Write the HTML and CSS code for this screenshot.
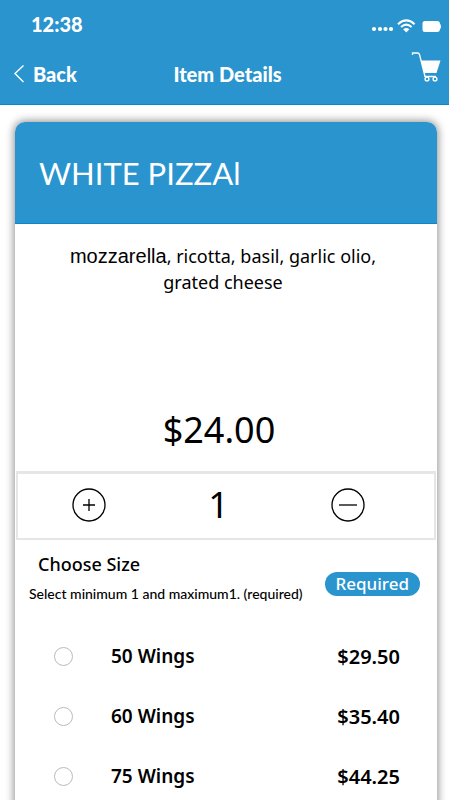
FILE: index.html
```html
<!DOCTYPE html>
<html lang="en">
<head>
<meta charset="utf-8">
<meta name="viewport" content="width=device-width, initial-scale=1">
<title>Item Details</title>
<link rel="stylesheet" href="styles.css">
</head>
<body>
<header class="topbar">
  <div class="status">
    <span class="time">12:38</span>
    <svg class="status-icons" width="70" height="18" viewBox="0 0 70 18" fill="#fff" aria-hidden="true">
      <circle cx="3" cy="12" r="2.1"/><circle cx="9" cy="12" r="2.1"/><circle cx="14.500" cy="12" r="2.100"/><circle cx="20" cy="12" r="2.1"/>
      <g fill="none" stroke="#fff" stroke-width="2"><path d="M27 7.200Q35.300-0.400 43.600 7.200"/><path d="M30 10Q35.300 5.200 40.600 10"/></g>
      <path d="M32.200 12.300Q35.300 9.700 38.400 12.300L35.300 15.500Z"/>
      <path d="M54 4H66Q69 4 69 7Q70 7.200 70 9.500Q70 11.800 69 12Q69 15 66 15H54Q51.500 15 51.500 12.500V6.500Q51.500 4 54 4Z"/>
    </svg>
  </div>
  <nav class="nav">
    <a class="back" href="#"><svg width="12" height="20" viewBox="0 0 12 20" fill="none" stroke="#fff" stroke-width="1.4" aria-hidden="true"><path d="M9.500 1.500L1 9.500L9.500 18"/></svg>Back</a>
    <h1 class="title">Item Details</h1>
    <button class="cart" type="button" aria-label="Cart"><svg width="30" height="32" viewBox="0 0 30 32" aria-hidden="true">
      <path d="M1.500 4V2H6.500Q8 2 8.500 3.500L14 25.500H25" fill="none" stroke="#fff" stroke-width="1.300"/>
      <path d="M10 9.500H29.500L25.500 22H13.500Z" fill="#fff"/>
      <g fill="none" stroke="#fff" stroke-width="1.400"><circle cx="16" cy="28" r="1.900"/><circle cx="24" cy="28" r="1.900"/></g>
    </svg></button>
  </nav>
</header>
<main class="card">
  <h2 class="item-name">WHITE PIZZAl</h2>
  <div class="summary">
    <p class="description"><span class="lead">mozzarella</span>, ricotta, basil, garlic olio,<br>grated cheese</p>
    <p class="price">$24.00</p>
  </div>
  <div class="quantity">
    <button class="step" type="button" aria-label="Add one"><svg width="34" height="34" viewBox="0 0 34 34" fill="none" stroke="#000" stroke-width="1.300"><circle cx="17" cy="17" r="16"/><path d="M11 17H23M17 11V23"/></svg></button>
    <output class="count">1</output>
    <button class="step" type="button" aria-label="Remove one"><svg width="34" height="34" viewBox="0 0 34 34" fill="none" stroke="#000" stroke-width="1.300"><circle cx="17" cy="17" r="16"/><path d="M8 17H26"/></svg></button>
  </div>
  <section class="choices">
    <div class="choice-head">
      <div>
        <h3 class="choice-title">Choose Size</h3>
        <p class="hint">Select minimum 1 and maximum1. (required)</p>
      </div>
      <span class="badge">Required</span>
    </div>
    <div class="options">
      <label class="option"><input type="radio" name="size"><span>50 Wings</span><span class="cost">$29.50</span></label>
      <label class="option"><input type="radio" name="size"><span>60 Wings</span><span class="cost">$35.40</span></label>
      <label class="option"><input type="radio" name="size"><span>75 Wings</span><span class="cost">$44.25</span></label>
    </div>
  </section>
</main>
</body>
</html>
```
FILE: styles.css
```css
* {
  box-sizing: border-box;
}

body,
h1,
h2,
h3,
p {
  margin: 0;
}

body {
  background: #fff;
  color: #000;
  font-family: "Noto Sans", sans-serif;
  height: 100vh;
  overflow: hidden;
}

button {
  padding: 0;
  border: 0;
  background: none;
  color: inherit;
}

svg {
  display: block;
}

.topbar {
  margin-right: 1px;
  padding: 9px 8px 0 14px;
  height: 105px;
  border-bottom: 1px solid #0b86c7;
  background: #2994ce;
  color: #fff;
  font-family: Lato, sans-serif;
  font-size: 20px;
  font-weight: 900;
}

.status {
  display: flex;
  justify-content: space-between;
  align-items: center;
  height: 30px;
  padding-left: 17px;
}

.status-icons {
  margin-top: 4px;
}

.nav {
  display: grid;
  grid-template-columns: 1fr auto 1fr;
  align-items: center;
  height: 48px;
  margin-top: 7px;
}

.back {
  display: flex;
  align-items: center;
  gap: 7px;
  padding-top: 8px;
  color: inherit;
  text-decoration: none;
}

.title {
  padding-top: 8px;
  font-size: 20px;
  font-weight: 900;
}

.cart {
  justify-self: end;
  margin-top: -6px;
}

.card {
  margin: 17px 13px 0 15px;
  min-height: 700px;
  border-radius: 10px 10px 0 0;
  background: #fff;
  box-shadow: 0 0 8px 1px rgba(0, 0, 0, 0.45);
}

.item-name {
  display: flex;
  align-items: center;
  height: 102px;
  padding-left: 24px;
  border-bottom: 1px solid #0b86c7;
  border-radius: 10px 10px 0 0;
  background: #2994ce;
  color: #fff;
  font-family: Lato, sans-serif;
  font-size: 31px;
  font-weight: 400;
}

.summary {
  display: flex;
  flex-direction: column;
  justify-content: space-between;
  height: 247px;
  padding: 19px 0 16px;
  text-align: center;
}

.description {
  padding-right: 6px;
  font-size: 18px;
  line-height: 26px;
}

.lead {
  font-family: "Liberation Sans", sans-serif;
  font-size: 20px;
}

.price {
  padding-right: 14px;
  font-size: 36px;
  line-height: 50px;
}

.quantity {
  display: flex;
  justify-content: space-between;
  align-items: center;
  height: 69px;
  margin: 0 1px;
  padding: 0 69px 3px 54px;
  border: 2px solid #e6e6e6;
  border-top-width: 3px;
}

.count {
  font-size: 36px;
  line-height: 50px;
}

.choice-head {
  display: flex;
  justify-content: space-between;
  align-items: center;
  padding: 10px 17px 0 14px;
}

.choice-title {
  padding-left: 9px;
  font-size: 18px;
  font-weight: 500;
  line-height: 28px;
}

.hint {
  font-family: Lato, sans-serif;
  font-size: 14px;
  font-weight: 500;
  line-height: 32px;
}

.badge {
  margin-top: 8px;
  padding: 0 11px;
  border-radius: 12px;
  background: #2994ce;
  color: #fff;
  font-size: 17px;
  font-weight: 500;
  line-height: 24px;
}

.options {
  display: grid;
  grid-auto-rows: 60px;
  padding: 16px 37px 0 39px;
}

.option {
  display: flex;
  align-items: center;
  font-size: 19px;
  font-weight: 600;
}

.option input {
  appearance: none;
  width: 19px;
  height: 19px;
  margin: 0 38px 0 0;
  border: 1px solid #bbb;
  border-radius: 50%;
}

.option input:checked {
  background: #2994ce;
}

.cost {
  margin-left: auto;
  font-size: 20px;
}
```
